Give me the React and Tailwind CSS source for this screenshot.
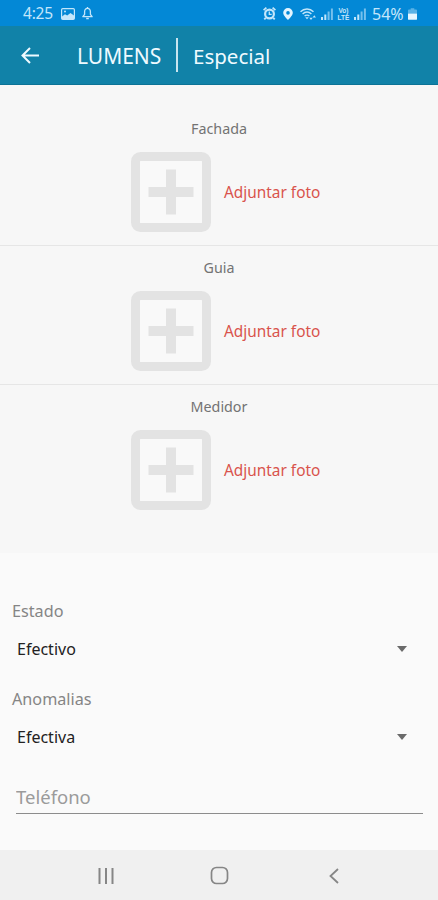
import React, { useState } from 'react';

const photos = ['Fachada', 'Guia', 'Medidor'];

const SignalIcon = () => (
  <svg className="w-3 h-3" viewBox="0 0 12 12" fill="currentColor">
    <path d="M0 9h2v3H0zM3.3 6.5h2V12h-2z" />
    <path d="M6.6 3.5h2V12h-2zM9.9 0.5h2V12h-2z" opacity="0.6" />
  </svg>
);

const StatusBar = () => (
  <div className="flex h-[26px] items-center bg-[#0388d6] pl-[23px] pr-[21px] pt-px text-[#c3e6fb]">
    <span className="w-[31px] text-[15.5px] leading-none tracking-[-0.2px]">4:25</span>
    <svg className="ml-[7px] w-[14px] h-3" viewBox="0 0 14 12">
      <rect x="0.6" y="0.6" width="12.8" height="10.8" rx="1.2" fill="none" stroke="currentColor" strokeWidth="1.2" />
      <path d="M1 11V8.5l3-2.3 2.2 1.4L9.5 5 13 7.5V11z" fill="currentColor" />
      <circle cx="4" cy="3.5" r="1" fill="currentColor" />
    </svg>
    <svg className="ml-[7px] w-[11px] h-[13px]" viewBox="0 0 11 13" fill="none" stroke="currentColor" strokeWidth="1.3">
      <path d="M5.5 1.4C3.6 1.4 2.6 3 2.6 4.7v2.6L0.9 9.7h9.2L8.4 7.3V4.7c0-1.7-1-3.3-2.9-3.3z" strokeLinejoin="round" />
      <path d="M4.2 11.5h2.6M5.5 0v1.4" />
    </svg>

    <div className="ml-auto flex items-center">
      <svg className="w-[13px] h-[13px]" viewBox="0 0 13 13" fill="none" stroke="currentColor">
        <circle cx="6.5" cy="7" r="4.4" strokeWidth="2.2" />
        <path d="M0.6 3.2L3.4 0.7M12.4 3.2L9.6 0.7M2.7 10.8L1.3 12.4M10.3 10.8l1.4 1.6" strokeWidth="1.8" />
        <path d="M6.3 4.5V7.3h2.4" strokeWidth="1.3" />
      </svg>
      <svg className="ml-[7px] w-2.5 h-3 text-[#e2f4ff]" viewBox="0 0 10 12" fill="currentColor">
        <path fillRule="evenodd" d="M5 0a4.8 4.8 0 0 0-4.8 4.8C0.2 7.8 5 12 5 12s4.8-4.2 4.8-7.2A4.8 4.8 0 0 0 5 0zm0 3.100a1.8 1.8 0 1 1 0 3.6 1.8 1.8 0 0 1 0-3.6z" />
      </svg>
      <svg className="ml-[7px] w-4 h-3" viewBox="0 0 16 12" fill="none" stroke="currentColor" strokeWidth="1.4">
        <path d="M0.5 3.7C4.2 0 9.8 0 13.5 3.7M2.6 6C5.2 3.4 8.8 3.4 11.4 6M4.6 8.1c1.3-1.3 3.5-1.3 4.8 0" />
        <path d="M5.2 9.2h3.6L7 11.2z" fill="currentColor" stroke="none" />
        <path d="M9.3 9.8L11 12l1.7-2.2zM12.6 9.4l1.7-2.2L16 9.4z" fill="currentColor" stroke="none" />
      </svg>
      <span className="ml-[5px]"><SignalIcon /></span>
      <span className="ml-1 flex w-[13px] flex-col items-center font-['Liberation_Sans',sans-serif] text-[6.5px] font-bold leading-[7px]">
        <span>Vo)</span>
        <span>LTE</span>
      </span>
      <span className="ml-[4px]"><SignalIcon /></span>
      <span className="ml-[6px] w-[33px] text-[16px] leading-none">54%</span>
      <svg className="ml-[3px] w-[9px] h-3" viewBox="0 0 10 13" fill="currentColor">
        <path d="M3 0h4v1.5h2a1 1 0 0 1 1 1V6H0V2.5a1 1 0 0 1 1-1h2z" opacity="0.45" />
        <path d="M0 6h10v6a1 1 0 0 1-1 1H1a1 1 0 0 1-1-1z" className="fill-[#e6f6ff]" />
      </svg>
    </div>
  </div>
);

const AppBar = () => (
  <header className="flex h-[59px] items-center border-b border-[#0c7396] bg-[#1182a8] pl-[21px] text-[21px] text-[#eefaff]">
    <button type="button" aria-label="Volver">
      <svg className="w-[19px] h-[17px]" viewBox="0 0 19 17" fill="none" stroke="currentColor" strokeWidth="2">
        <path d="M18 8.5H2M9 1L1.5 8.5 9 16" />
      </svg>
    </button>
    <h1 className="ml-[37px] w-[84px] whitespace-nowrap pt-1">LUMENS</h1>
    <span className="ml-[15px] h-[34px] w-[2px] bg-[#c9e5ef]" />
    <h2 className="ml-[15px] whitespace-nowrap pt-[2px] text-[20.5px]">Especial</h2>
  </header>
);

const PhotoRow = ({ label }) => (
  <div className="h-[139px] border-b border-[#e6e6e6] pt-[12px] last:border-0">
    <p className="text-center text-[14.3px] leading-5 text-[#737373]">{label}</p>
    <button type="button" className="ml-[131px] mt-[13px] flex items-center">
      <svg className="w-20 h-20" viewBox="0 0 80 80">
        <rect x="4.5" y="4.5" width="71" height="71" rx="5" fill="#f9f9f9" stroke="#e3e3e3" strokeWidth="9" />
        <path d="M40 17.5v45M17.5 40h45" stroke="#e3e3e3" strokeWidth="10" />
      </svg>
      <span className="ml-[13px] whitespace-nowrap pt-px text-[15.4px] text-[#d9534c]">Adjuntar foto</span>
    </button>
  </div>
);

const SelectField = ({ label, value }) => (
  <div className="h-[87.5px]">
    <p className="pl-3 text-[16.2px] leading-6 text-[#858585]">{label}</p>
    <button type="button" className="mt-[14px] flex w-full items-center justify-between pl-[17px] pr-[31px] text-[16px] leading-6 text-[#222]">
      <span>{value}</span>
      <svg className="w-2.5 h-[6px]" viewBox="0 0 10 6" fill="#6a6a6a">
        <path d="M0 0h10L5 6z" />
      </svg>
    </button>
  </div>
);

const NavBar = () => (
  <nav className="flex h-[50px] items-center bg-[#f0f0f0] text-[#868686]">
    <svg className="ml-[98px] mt-[2px] w-4 h-4" viewBox="0 0 16 16" stroke="currentColor" strokeWidth="2">
      <path d="M1.5 0v16M8 0v16M14.5 0v16" />
    </svg>
    <svg className="ml-[96px] mt-[1px] w-[19px] h-[19px]" viewBox="0 0 19 19" fill="none" stroke="currentColor" strokeWidth="1.7">
      <rect x="1.5" y="1.5" width="16" height="16" rx="5" />
    </svg>
    <svg className="ml-[100px] mt-[1px] w-[10px] h-4" viewBox="0 0 10 16" fill="none" stroke="currentColor" strokeWidth="1.8">
      <path d="M9 1L1.5 8 9 15" />
    </svg>
  </nav>
);

export default function App() {
  const [phone, setPhone] = useState('');

  return (
    <div className="flex h-[900px] w-[438px] flex-col overflow-hidden bg-[#fafafa] font-['Noto_Sans',sans-serif]">
      <StatusBar />
      <AppBar />
      <section className="h-[468px] bg-[#f7f7f7] pt-[22px]">
        {photos.map((label) => (
          <PhotoRow key={label} label={label} />
        ))}
      </section>
      <section className="flex-1 pt-[46px]">
        <SelectField label="Estado" value="Efectivo" />
        <SelectField label="Anomalias" value="Efectiva" />
        <input
          type="tel"
          value={phone}
          onChange={(e) => setPhone(e.target.value)}
          placeholder="Teléfono"
          className="ml-4 mt-[8px] h-[32px] w-[407px] border-b border-[#8c8c8c] pb-[2px] text-[18.5px] outline-none placeholder:text-[#9b9b9b]"
        />
      </section>
      <NavBar />
    </div>
  );
}
